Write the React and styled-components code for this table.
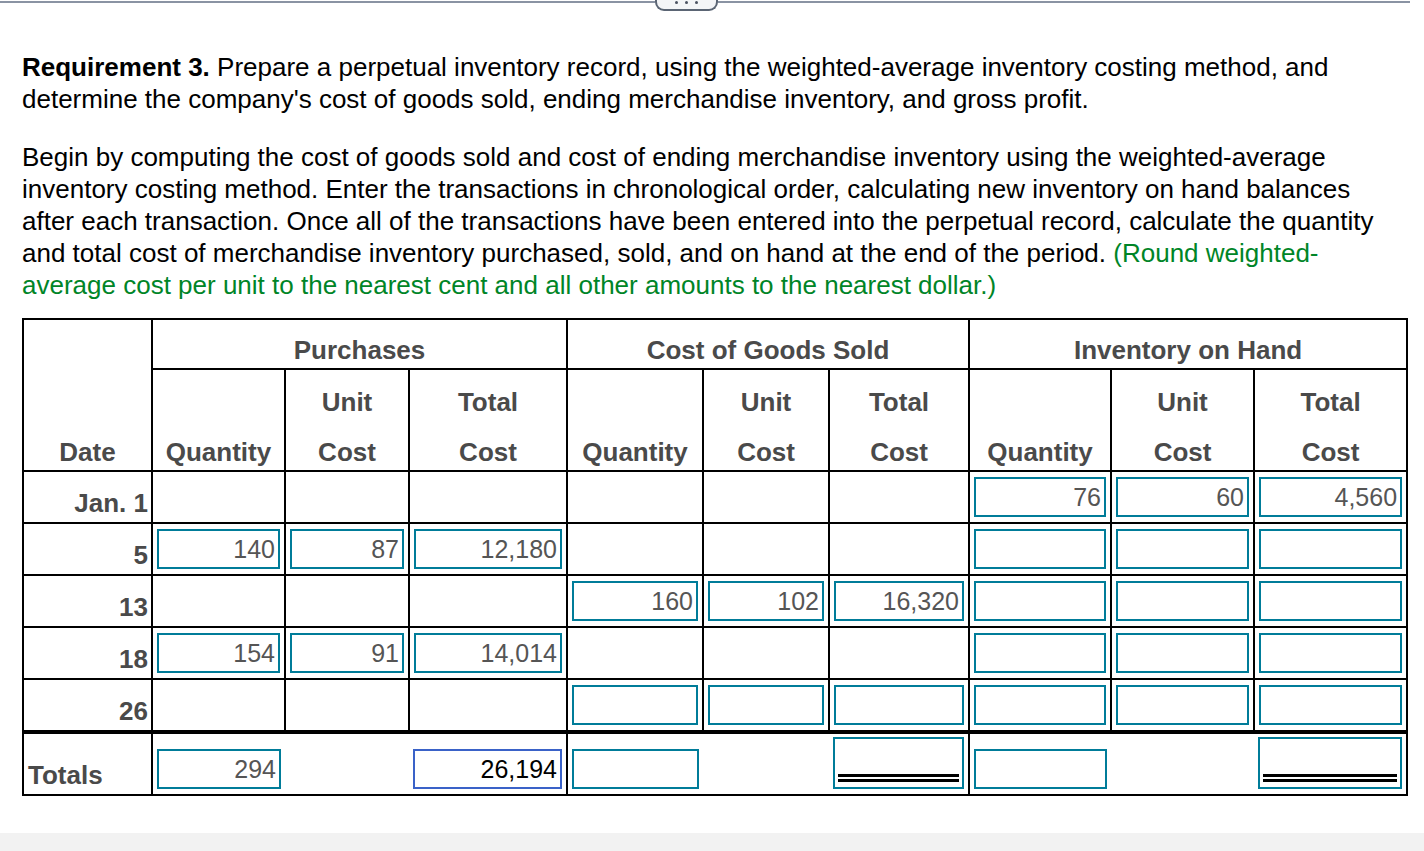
import React from 'react';
import styled, { createGlobalStyle } from 'styled-components';

const GlobalStyle = createGlobalStyle`
  html, body {
    margin: 0;
    padding: 0;
    background: #fff;
    font-family: "Liberation Sans", Arial, Helvetica, sans-serif;
  }
`;

const rows = [
  { date: 'Jan. 1', p: null, c: null, i: ['76', '60', '4,560'] },
  { date: '5', p: ['140', '87', '12,180'], c: null, i: ['', '', ''] },
  { date: '13', p: null, c: ['160', '102', '16,320'], i: ['', '', ''] },
  { date: '18', p: ['154', '91', '14,014'], c: null, i: ['', '', ''] },
  { date: '26', p: null, c: ['', '', ''], i: ['', '', ''] },
];

const colWidths = [129, 133, 124, 158, 136, 126, 140, 142, 143, 153];

function Group({ values }) {
  if (!values) {
    return (
      <>
        <Td />
        <Td />
        <Td />
      </>
    );
  }
  return (
    <>
      {values.map((v, idx) => (
        <Td key={idx}>
          <Box>{v}</Box>
        </Td>
      ))}
    </>
  );
}

// totals row: only the group edges keep their vertical rules
function TotalsGroup({ qty, total }) {
  return (
    <>
      <TotalTd $noRight>{qty}</TotalTd>
      <TotalTd $noLeft $noRight />
      <TotalTd $noLeft>{total}</TotalTd>
    </>
  );
}

function App() {
  return (
    <Page>
      <GlobalStyle />
      <TopBar>
        <Rule $w={655} />
        <Handle>
          <Dot />
          <Dot />
          <Dot />
        </Handle>
        <Rule $grow />
      </TopBar>

      <Content>
        <Para>
          <strong>Requirement 3.</strong> Prepare a perpetual inventory record, using the weighted-average inventory costing method, and
          determine the company's cost of goods sold, ending merchandise inventory, and gross profit.
        </Para>
        <Para $gap>
          Begin by computing the cost of goods sold and cost of ending merchandise inventory using the weighted-average
          inventory costing method. Enter the transactions in chronological order, calculating new inventory on hand balances
          after each transaction. Once all of the transactions have been entered into the perpetual record, calculate the quantity
          and total cost of merchandise inventory purchased, sold, and on hand at the end of the period.{' '}
          <Hint>(Round weighted-average cost per unit to the nearest cent and all other amounts to the nearest dollar.)</Hint>
        </Para>

        <Table>
          <colgroup>
            {colWidths.map((w, idx) => (
              <col key={idx} style={{ width: w }} />
            ))}
          </colgroup>
          <thead>
            <tr>
              <Th rowSpan={2} $top={17}>Date</Th>
              <Th colSpan={3} $top={15}>Purchases</Th>
              <Th colSpan={3} $top={15}>Cost of Goods Sold</Th>
              <Th colSpan={3} $top={15}>Inventory on Hand</Th>
            </tr>
            <tr>
              {[0, 1, 2].map((g) => (
                <React.Fragment key={g}>
                  <Th $top={17}>Quantity</Th>
                  <Th $top={17}>
                    <TopWord>Unit</TopWord>Cost
                  </Th>
                  <Th $top={17}>
                    <TopWord>Total</TopWord>Cost
                  </Th>
                </React.Fragment>
              ))}
            </tr>
          </thead>
          <tbody>
            {rows.map((r) => (
              <tr key={r.date}>
                <DateCell>{r.date}</DateCell>
                <Group values={r.p} />
                <Group values={r.c} />
                <Group values={r.i} />
              </tr>
            ))}
            <tr>
              <TotalLabel>Totals</TotalLabel>
              <TotalsGroup qty={<Box>294</Box>} total={<Box $focus>26,194</Box>} />
              <TotalsGroup
                qty={<Box />}
                total={
                  <TallBox>
                    <DoubleRule />
                  </TallBox>
                }
              />
              <TotalsGroup
                qty={<Box />}
                total={
                  <TallBox>
                    <DoubleRule />
                  </TallBox>
                }
              />
            </tr>
          </tbody>
        </Table>
      </Content>

      <Footer />
    </Page>
  );
}

const Page = styled.div`
  min-height: 100vh;
  display: flex;
  flex-direction: column;
`;

const TopBar = styled.div`
  display: flex;
  align-items: flex-start;
  width: 1410px;
  height: 11px;
`;

const Rule = styled.div`
  height: 2px;
  margin-top: 1px;
  background: #8a93a3;
  flex: ${(p) => (p.$grow ? 1 : 'none')};
  width: ${(p) => (p.$w ? `${p.$w}px` : 'auto')};
`;

const Handle = styled.div`
  width: 63px;
  height: 11px;
  box-sizing: border-box;
  border: 2px solid #5b6574;
  border-top: none;
  border-radius: 0 0 9px 9px;
  background: #f4f5f7;
  display: flex;
  justify-content: center;
  gap: 7px;
`;

const Dot = styled.span`
  width: 3px;
  height: 3px;
  margin-top: 1px;
  border-radius: 50%;
  background: #4a5260;
`;

const Content = styled.div`
  flex: 1;
  padding: 40px 0 0 22px;
`;

const Para = styled.p`
  margin: ${(p) => (p.$gap ? '26px' : '0')} 0 0;
  width: 1370px;
  font-size: 26px;
  line-height: 32px;
  color: #000;
`;

const Hint = styled.span`
  color: #008527;
`;

const Table = styled.table`
  margin-top: 17px;
  width: 1386px;
  table-layout: fixed;
  border-collapse: collapse;
  border: 2px solid #000;
  font-size: 26px;
  line-height: 30px;
`;

const Th = styled.th`
  border: 2px solid #000;
  padding: ${(p) => p.$top}px 4px 3px;
  color: #4a4a4a;
  font-weight: bold;
  text-align: center;
  vertical-align: bottom;
`;

const TopWord = styled.span`
  display: block;
  margin-bottom: 20px;
`;

const Td = styled.td`
  border: 2px solid #000;
  padding: 5px 4px;
  vertical-align: bottom;
`;

const DateCell = styled(Td)`
  padding: 5px 3px 4px 4px;
  text-align: right;
  font-weight: bold;
  color: #4a4a4a;
`;

const TotalTd = styled(Td)`
  border-top: 4px solid #000;
  border-left-style: ${(p) => (p.$noLeft ? 'hidden' : 'solid')};
  border-right-style: ${(p) => (p.$noRight ? 'hidden' : 'solid')};
  padding: 3px 4px 5px;
`;

const TotalLabel = styled(TotalTd)`
  padding: 3px 4px 4px;
  text-align: left;
  font-weight: bold;
  color: #4a4a4a;
`;

const Box = styled.div`
  height: 40px;
  box-sizing: border-box;
  border: 2px solid ${(p) => (p.$focus ? '#3a62c8' : '#007c99')};
  padding: 0 3px;
  font-size: 25px;
  line-height: 36px;
  text-align: right;
  color: ${(p) => (p.$focus ? '#000' : '#555')};
`;

const TallBox = styled.div`
  height: 52px;
  box-sizing: border-box;
  border: 2px solid #007c99;
  padding: 0 3px 5px;
  display: flex;
  align-items: flex-end;
`;

const DoubleRule = styled.div`
  width: 100%;
  height: 2px;
  border-top: 3px solid #000;
  border-bottom: 3px solid #000;
`;

const Footer = styled.div`
  height: 18px;
  background: #f2f2f2;
`;

export default App;
